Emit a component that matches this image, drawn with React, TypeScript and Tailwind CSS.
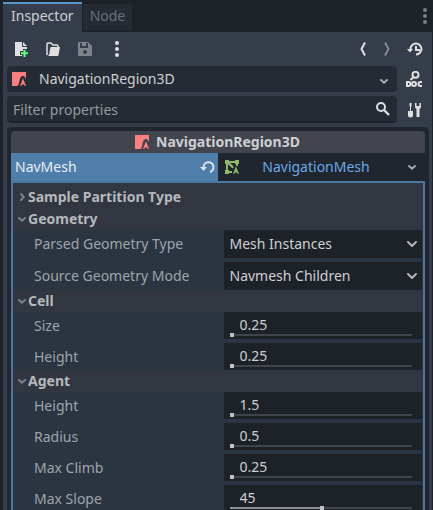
import { useState } from "react";
import type { ReactNode } from "react";

type IconProps = { className?: string; children: ReactNode };

function Icon({ className = "", children }: IconProps) {
  return (
    <svg viewBox="0 0 16 16" className={`block size-4 shrink-0 ${className}`} fill="currentColor" aria-hidden="true">
      {children}
    </svg>
  );
}

function Chevron({ className = "" }: { className?: string }) {
  return (
    <Icon className={className}>
      <path d="M5 7l3 2.700L11 7" fill="none" stroke="currentColor" strokeWidth="2" strokeLinecap="round" strokeLinejoin="round" />
    </Icon>
  );
}

function RegionIcon() {
  return (
    <Icon className="text-[#fc7f7f]">
      <path d="M1.500 1h13a.5.5 0 0 1 .5.5V8.500C14.500 6.300 13.400 5 12 5c-2.300 0-3 2.600-3.600 5.200C7.900 12.500 7.300 15 6.200 15H1V1.500a.5.5 0 0 1 .5-.5z" />
      <path d="M12 7.300 15 15h-.8L12 13l-2.200 2H9z" />
    </Icon>
  );
}

function MeshIcon() {
  return (
    <Icon className="text-[#8eb96c]">
      <path d="M1 1h4v1h6V1h4v4h-1v2h-2V5h-1V4H6.200l3.800 4-1.500 1.500L4 5.200V11h1v1h3v2H5v1H1v-4h1V5H1z" />
      <path d="M12 7.300 15 15h-.8L12 13l-2.200 2H9z" />
    </Icon>
  );
}

function Dots({ className = "" }: { className?: string }) {
  return (
    <Icon className={className}>
      <circle cx="8" cy="2" r="2" />
      <circle cx="8" cy="8" r="2" />
      <circle cx="8" cy="14" r="2" />
    </Icon>
  );
}

function IconButton({ label, className = "", children }: { label: string; className?: string; children: ReactNode }) {
  return (
    <button type="button" aria-label={label} className={`block shrink-0 ${className}`}>
      {children}
    </button>
  );
}

function Section({ title, open = true, children }: { title: string; open?: boolean; children?: ReactNode }) {
  return (
    <section>
      <button type="button" aria-expanded={open} className="flex h-[22px] w-full items-center bg-[#313640] pl-[1px] text-left font-bold text-[#b5b8bc]">
        <Chevron className={`-mr-[2px] text-[#7f848b] ${open ? "" : "-rotate-90"}`} />
        {title}
      </button>
      {children && <div className="flex flex-col gap-1">{children}</div>}
    </section>
  );
}

function Row({ id, label, children }: { id: string; label: string; children: ReactNode }) {
  return (
    <div className="grid grid-cols-2 pr-[1px]">
      <label htmlFor={id} className="pl-[21px] leading-[27px] text-[#9fa4aa]">
        {label}
      </label>
      <div className="ml-[6px] min-w-0 bg-[#1d2229]">{children}</div>
    </div>
  );
}

function SelectRow({ id, label, options }: { id: string; label: string; options: string[] }) {
  return (
    <Row id={id} label={label}>
      <div className="grid h-7 items-center">
        <select id={id} className="col-start-1 row-start-1 h-7 w-full appearance-none bg-transparent pl-[6px] text-[#cdcfd2] outline-none">
          {options.map((o) => (
            <option key={o}>{o}</option>
          ))}
        </select>
        <Icon className="pointer-events-none col-start-1 row-start-1 mr-[2px] justify-self-end text-[#b4b7ba]">
          <path d="M4 6l4 4 4-4" fill="none" stroke="currentColor" strokeWidth="2" strokeLinecap="round" strokeLinejoin="round" />
        </Icon>
      </div>
    </Row>
  );
}

type NumberProps = { id: string; label: string; initial: number; min: number; max: number };

function NumberRow({ id, label, initial, min, max }: NumberProps) {
  const [value, setValue] = useState(String(initial));
  const ratio = Math.min(1, Math.max(0, (Number(value) - min) / (max - min)));
  const fill = `${ratio * 100}%`;
  return (
    <Row id={id} label={label}>
      <div className="flex h-[27px] flex-col pr-[10px] pl-[6px]">
        <input
          id={id}
          type="text"
          value={value}
          onChange={(e) => setValue(e.target.value)}
          className="h-[21px] w-full bg-transparent pt-1 pl-[10px] text-[#cdcfd2] outline-none"
        />
        <input
          type="range"
          aria-label={`${label} slider`}
          min={min}
          max={max}
          step="any"
          value={Number(value) || min}
          onChange={(e) => setValue(e.target.value)}
          style={{ backgroundImage: `linear-gradient(to right, #8b8e93 ${fill}, #40454d ${fill})` }}
          className="block h-1 w-full appearance-none bg-[length:100%_2px] bg-center bg-no-repeat [&::-webkit-slider-thumb]:size-1 [&::-webkit-slider-thumb]:appearance-none [&::-webkit-slider-thumb]:bg-[#c0c2c5]"
        />
      </div>
    </Row>
  );
}

export default function App() {
  return (
    <div className="flex h-screen flex-col overflow-hidden bg-[#1d2229] pr-[1px] pl-[3px] font-['Noto_Sans',sans-serif] text-sm leading-5 text-[#cdcfd2]">
      <header className="flex h-8 shrink-0 items-center">
        <div role="tablist" className="flex flex-1 items-start gap-[1px] self-stretch pt-[2px]">
          <button type="button" role="tab" aria-selected="true" className="h-[30px] border-t-2 border-[#5a97cd] bg-[#363d4a] px-2 pb-1 text-[#cdcfd2]">
            Inspector
          </button>
          <button type="button" role="tab" aria-selected="false" className="mt-[2px] h-[26px] bg-[#252a33] px-[7px] pb-[2px] text-[#6b7078]">
            Node
          </button>
        </div>
        <IconButton label="Dock menu" className="-mr-[1px]">
          <Dots className="text-[#7b7e83]" />
        </IconButton>
      </header>

      <main className="flex min-h-0 flex-1 flex-col bg-[#363d4a] px-1">
        <div className="flex h-[34px] shrink-0 items-center justify-between pr-[5px] pl-[6px] text-[#e0e0e0]">
          <div className="flex gap-4">
            <IconButton label="New resource">
              <Icon>
                <path d="M2 1h7v5h5v2h-4v2H7v4h2v1H2z" />
                <path d="M10 1v4h4z" />
                <path d="M10.500 9h2v2.300H15v2h-2.500V16h-2v-2.700H8v-2h2.500z" fill="#5fff7f" />
              </Icon>
            </IconButton>
            <IconButton label="Load resource">
              <Icon>
                <path d="M2 14V3a1 1 0 0 1 1-1h3l2 2h4a1 1 0 0 1 1 1v1" fill="none" stroke="currentColor" strokeWidth="1.500" />
                <path d="M5.500 6H15l-1.500 8a1 1 0 0 1-1 1H2c1.500 0 2-1 2.200-2z" />
              </Icon>
            </IconButton>
            <IconButton label="Save resource" className="text-[#7f838a]">
              <Icon>
                <path fillRule="evenodd" d="M2 1h9l4 4v9a1 1 0 0 1-1 1H2a1 1 0 0 1-1-1V2a1 1 0 0 1 1-1zm1 1v5h8V2H9v3H5V2zm5 7a2 2 0 1 0 0 4 2 2 0 0 0 0-4z" />
              </Icon>
            </IconButton>
            <IconButton label="More options">
              <Dots />
            </IconButton>
          </div>
          <div className="flex">
            <IconButton label="Previous object">
              <Icon>
                <path d="M10 1.500 6.500 8l3.500 6.500" fill="none" stroke="currentColor" strokeWidth="2" />
              </Icon>
            </IconButton>
            <IconButton label="Next object" className="ml-2 text-[#83878e]">
              <Icon>
                <path d="M6 1.500 9.500 8 6 14.500" fill="none" stroke="currentColor" strokeWidth="2" />
              </Icon>
            </IconButton>
            <IconButton label="History" className="ml-3">
              <Icon>
                <path d="M3.500 8.500A5.500 5.500 0 1 1 9 13.500" fill="none" stroke="currentColor" strokeWidth="2" />
                <path d="M0 8h6l-3 3.500zM8 5h2v3h3v2H8z" />
              </Icon>
            </IconButton>
          </div>
        </div>

        <div className="flex h-[26px] shrink-0 items-center">
          <button type="button" className="flex h-full flex-1 items-center rounded-sm bg-[#252b34] pr-[5px] pl-1 text-left">
            <RegionIcon />
            <span className="flex-1 pl-3">NavigationRegion3D</span>
            <Chevron className="mt-1 text-[#a5a8ac]" />
          </button>
          <IconButton label="Open documentation" className="mr-[6px] ml-[9px] text-[#e0e0e0]">
            <Icon>
              <circle cx="9.500" cy="3.800" r="3" fill="none" stroke="currentColor" strokeWidth="2" />
              <path d="M7.500 6 4.500 9" stroke="currentColor" strokeWidth="2" />
              <path fillRule="evenodd" d="M0 10h2.500a3 3 0 0 1 0 6H0zm2 2v2h.5a1 1 0 0 0 0-2z" />
              <path d="M8 11a2 2 0 1 0 0 4 2 2 0 0 0 0-4zM16 11h-1.500a2 2 0 0 0 0 4H16" fill="none" stroke="currentColor" strokeWidth="2" />
            </Icon>
          </IconButton>
        </div>

        <div className="mt-1 flex h-[27px] shrink-0 items-center">
          <div className="flex h-full flex-1 items-center rounded-sm border-b-2 border-[#1e2229] bg-[#252b34] pr-[6px]">
            <input type="text" aria-label="Filter properties" placeholder="Filter properties" className="h-full min-w-0 flex-1 bg-transparent pt-[2px] pl-[6px] outline-none placeholder:text-[#96999d]" />
            <Icon className="text-[#dcdddf]">
              <circle cx="6" cy="6" r="4" fill="none" stroke="currentColor" strokeWidth="2" />
              <path d="m9 9 5 5" stroke="currentColor" strokeWidth="2.400" />
            </Icon>
          </div>
          <IconButton label="Property tools" className="mr-[6px] ml-[9px] text-[#e0e0e0]">
            <Icon>
              <path d="M3.500 1h2v3L5 5v4h2v4a2.500 2.500 0 0 1-5 0V9h2V5l-.5-1zM9 1v3.500A2.500 2.500 0 0 0 10.500 7v8h3V7A2.500 2.500 0 0 0 15 4.500V1h-1.500v3h-3V1z" />
            </Icon>
          </IconButton>
        </div>

        <div className="mt-1 -mr-[1px] min-h-0 flex-1 overflow-hidden rounded-t-sm bg-[#21252e] px-1 pt-1">
          <h2 className="flex h-[22px] items-center justify-center gap-[6px] rounded-t-sm bg-[#42454d] pr-[2px] font-bold">
            <RegionIcon />
            NavigationRegion3D
          </h2>
          <div className="grid h-7 grid-cols-2">
            <div className="flex items-center bg-[#4e7ea9] pr-[2px] pl-1 text-[#e9edf1]">
              <span className="flex-1">NavMesh</span>
              <IconButton label="Revert NavMesh">
                <Icon className="text-[#dfe3e7]">
                  <path d="M3.500 8.500A5 5 0 1 1 10 13" fill="none" stroke="currentColor" strokeWidth="2" />
                  <path d="M0 8h7l-3.500 4z" />
                </Icon>
              </IconButton>
            </div>
            <button type="button" className="flex items-center pr-[5px] pl-[6px] text-[#66aae8]">
              <MeshIcon />
              <span className="flex-1 pr-3 text-center">NavigationMesh</span>
              <Chevron className="text-[#a5a8ac]" />
            </button>
          </div>

          <div className="border-2 border-[#4b78a3] bg-[#2b3542]">
            <div className="bg-[#313640] pt-[3px]">
              <Section title="Sample Partition Type" open={false} />
            </div>
            <Section title="Geometry">
              <SelectRow id="parsed-type" label="Parsed Geometry Type" options={["Mesh Instances", "Static Colliders", "Both"]} />
              <SelectRow id="source-mode" label="Source Geometry Mode" options={["Navmesh Children", "Group With Children", "Group Explicit"]} />
            </Section>
            <Section title="Cell">
              <NumberRow id="cell-size" label="Size" initial={0.25} min={0.25} max={100} />
              <NumberRow id="cell-height" label="Height" initial={0.25} min={0.25} max={100} />
            </Section>
            <Section title="Agent">
              <NumberRow id="agent-height" label="Height" initial={1.5} min={1.5} max={500} />
              <NumberRow id="agent-radius" label="Radius" initial={0.5} min={0.5} max={500} />
              <NumberRow id="agent-climb" label="Max Climb" initial={0.25} min={0.25} max={500} />
              <NumberRow id="agent-slope" label="Max Slope" initial={45} min={0} max={89} />
            </Section>
          </div>
        </div>
      </main>
    </div>
  );
}
